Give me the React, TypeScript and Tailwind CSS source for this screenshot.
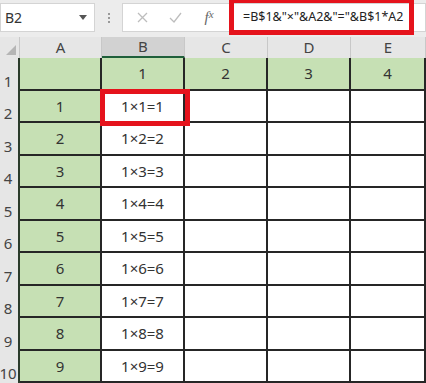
import React from 'react';

const cols = ['A', 'B', 'C', 'D', 'E'];
const rows = [1, 2, 3, 4, 5, 6, 7, 8, 9, 10];

function cellText(r: number, c: number): string {
  if (r === 1) return c === 0 ? '' : String(c);
  if (c === 0) return String(r - 1);
  if (c === 1) return `1×${r - 1}=${r - 1}`;
  return '';
}

function isGreen(r: number, c: number) {
  return r === 1 || c === 0;
}

export default function App() {
  return (
    <div
      className="relative w-[426px] h-[383px] overflow-hidden bg-[#ececec] text-[#333]"
      style={{ fontFamily: '"Noto Sans", "Noto Sans CJK SC", sans-serif' }}
    >
      {/* formula bar */}
      <div className="flex h-[37px] items-start pt-[3px]">
        <div className="flex h-[29px] w-[95px] items-center justify-between border border-[#d4d4d4] bg-white pl-[4px] pr-[7px] text-[14px]">
          <span>B2</span>
          <svg width="8" height="5" viewBox="0 0 8 5">
            <path d="M0 0 L8 0 L4 5 Z" fill="#555" />
          </svg>
        </div>
        <div className="flex h-[29px] w-[27px] flex-col items-center justify-center gap-[2px]">
          <span className="h-[2px] w-[2px] bg-[#999]" />
          <span className="h-[2px] w-[2px] bg-[#999]" />
          <span className="h-[2px] w-[2px] bg-[#999]" />
        </div>
        <div className="flex h-[29px] flex-1 items-center border border-[#d4d4d4] bg-white">
          <div className="flex w-[38px] justify-center">
            <svg width="11" height="11" viewBox="0 0 11 11">
              <path d="M1 1 L10 10 M10 1 L1 10" stroke="#bdbdbd" strokeWidth="1.3" />
            </svg>
          </div>
          <div className="flex w-[28px] justify-center">
            <svg width="13" height="11" viewBox="0 0 13 11">
              <path d="M1 6 L5 10 L12 1" stroke="#bdbdbd" strokeWidth="1.3" fill="none" />
            </svg>
          </div>
          <div
            className="flex w-[40px] justify-center text-[15px] italic text-[#666]"
            style={{ fontFamily: '"Liberation Serif", serif' }}
          >
            f<span className="text-[11px]">x</span>
          </div>
          <div className="ml-[14px] whitespace-nowrap text-[12.5px] text-[#222]">
            =B$1&amp;"×"&amp;A2&amp;"="&amp;B$1*A2
          </div>
        </div>
      </div>

      {/* sheet grid */}
      <div className="grid grid-cols-[20px_82px_83px_83px_83px_1fr] grid-rows-[21px_repeat(10,32.5px)]">
        <div className="relative border-r border-[#c8c8c8] bg-[#e6e6e6]">
          <svg className="absolute bottom-[3px] right-[3px]" width="10" height="10" viewBox="0 0 10 10">
            <path d="M10 0 L10 10 L0 10 Z" fill="#b5b5b5" />
          </svg>
        </div>
        {cols.map((c) => (
          <div
            key={c}
            className={
              c === 'B'
                ? 'flex items-center justify-center border-r border-b-2 border-r-[#c8c8c8] border-b-[#1f5f3a] bg-[#d2d2d2] text-[15px] text-[#444]'
                : 'flex items-center justify-center border-r border-[#c8c8c8] bg-[#e6e6e6] text-[15px] text-[#444]'
            }
          >
            {c}
          </div>
        ))}
        {rows.map((r) => (
          <React.Fragment key={r}>
            <div className="relative border-r-2 border-[#2b3b2b] bg-[#e6e6e6]">
              <span className="absolute bottom-[1px] left-[8px] -translate-x-1/2 text-[15px] leading-[18px] text-[#444]">
                {r}
              </span>
            </div>
            {cols.map((c, ci) => (
              <div
                key={c}
                className={
                  (isGreen(r, ci) ? 'bg-[#c6e0b4] ' : 'bg-white ') +
                  'flex items-center justify-center border-r-2 border-b-2 border-[#262626] text-[15px] text-[#333]'
                }
              >
                {cellText(r, ci)}
              </div>
            ))}
          </React.Fragment>
        ))}
      </div>

      {/* red annotation boxes */}
      <div className="absolute left-[229px] top-[-2px] h-[37px] w-[185px] border-[5px] border-[#e5131c]" />
      <div className="absolute left-[100px] top-[89px] h-[37px] w-[90px] border-[5px] border-[#e5131c]" />
    </div>
  );
}
